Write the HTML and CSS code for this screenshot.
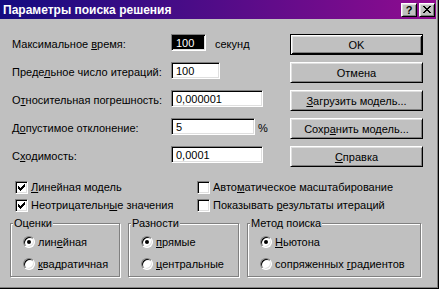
FILE: index.html
```html
<!DOCTYPE html>
<html lang="ru">
<head>
<meta charset="utf-8">
<title>Параметры поиска решения</title>
<link rel="stylesheet" href="styles.css">
</head>
<body>
<div class="window">
  <div class="titlebar">
    <span class="title">Параметры поиска решения</span>
    <div class="tb-buttons">
      <span class="tb-btn help">?</span>
      <span class="tb-btn close"><svg width="8" height="7" viewBox="0 0 8 7" shape-rendering="crispEdges"><path d="M0 0h2v1h-2z M6 0h2v1h-2z M1 1h2v1h-2z M5 1h2v1h-2z M2 2h4v1h-4z M3 3h2v1h-2z M2 4h4v1h-4z M1 5h2v1h-2z M5 5h2v1h-2z M0 6h2v1h-2z M6 6h2v1h-2z" fill="#000"/></svg></span>
    </div>
  </div>
  <div class="content">
    <div class="params">
      <div class="label">Максимальное <u>в</u>ремя:</div>
      <div class="cell"><div class="field w1 sel">100</div><span class="suffix sec">секунд</span></div>
      <div class="btn default">OK</div>

      <div class="label">Преде<u>л</u>ьное число итераций:</div>
      <div class="cell"><div class="field w2">100</div></div>
      <div class="btn">Отмена</div>

      <div class="label">О<u>т</u>носительная погрешность:</div>
      <div class="cell"><div class="field w3">0,000001</div></div>
      <div class="btn"><span><u>З</u>агрузить модель...</span></div>

      <div class="label">Д<u>о</u>пустимое отклонение:</div>
      <div class="cell"><div class="field w4">5</div><span class="suffix pct">%</span></div>
      <div class="btn"><span>Сохр<u>а</u>нить модель...</span></div>

      <div class="label">С<u>х</u>одимость:</div>
      <div class="cell"><div class="field w3">0,0001</div></div>
      <div class="btn"><span><u>С</u>правка</span></div>
    </div>

    <div class="checks">
      <div class="check"><span class="box"><svg width="11" height="11" viewBox="0 0 11 11" shape-rendering="crispEdges"><path d="M8 2h1v1h-1z M7 3h2v1h-2z M2 4h1v1h-1z M6 4h3v1h-3z M2 5h2v1h-2z M5 5h3v1h-3z M2 6h5v1h-5z M3 7h3v1h-3z M4 8h1v1h-1z" fill="#000"/></svg></span><span><u>Л</u>инейная модель</span></div>
      <div class="check"><span class="box"></span><span>Авто<u>м</u>атическое масштабирование</span></div>
      <div class="check"><span class="box"><svg width="11" height="11" viewBox="0 0 11 11" shape-rendering="crispEdges"><path d="M8 2h1v1h-1z M7 3h2v1h-2z M2 4h1v1h-1z M6 4h3v1h-3z M2 5h2v1h-2z M5 5h3v1h-3z M2 6h5v1h-5z M3 7h3v1h-3z M4 8h1v1h-1z" fill="#000"/></svg></span><span>Неотрицательн<u>ы</u>е значения</span></div>
      <div class="check"><span class="box"></span><span>Показывать <u>р</u>езультаты итераций</span></div>
    </div>

    <div class="groups">
      <fieldset class="group">
        <legend>Оценки</legend>
        <div class="opt"><span class="radio on"></span><span>лин<u>е</u>йная</span></div>
        <div class="opt"><span class="radio"></span><span><u>к</u>вадратичная</span></div>
      </fieldset>
      <fieldset class="group">
        <legend>Разности</legend>
        <div class="opt"><span class="radio on"></span><span><u>п</u>рямые</span></div>
        <div class="opt"><span class="radio"></span><span><u>ц</u>ентральные</span></div>
      </fieldset>
      <fieldset class="group">
        <legend>Метод поиска</legend>
        <div class="opt"><span class="radio on"></span><span><u>Н</u>ьютона</span></div>
        <div class="opt"><span class="radio"></span><span>сопряженных <u>г</u>радиентов</span></div>
      </fieldset>
    </div>
  </div>
</div>
</body>
</html>
```
FILE: styles.css
```css
* { box-sizing: border-box; }
html, body { margin: 0; padding: 0; }
body {
  width: 439px;
  height: 289px;
  overflow: hidden;
  background: #c0c0c0;
  font-family: "Liberation Sans", Arial, sans-serif;
  font-size: 11px;
  color: #000;
}
u { text-decoration-thickness: 1px; text-underline-offset: 1px; }

.window {
  width: 439px;
  height: 289px;
  background: #c0c0c0;
  border-right: 1px solid #000;
  border-bottom: 1px solid #000;
  box-shadow: inset -1px -1px #808080;
  padding: 0 2px 2px 0;
  display: flex;
  flex-direction: column;
}

.titlebar {
  height: 19px;
  flex: none;
  display: flex;
  align-items: center;
  padding: 0 1px 0 3px;
  background: linear-gradient(to right, #140c80, #900c90);
}
.title {
  color: #fff;
  font-weight: bold;
  font-size: 12px;
  white-space: nowrap;
}
.tb-buttons { margin-left: auto; display: flex; gap: 2px; }
.tb-btn {
  width: 16px;
  height: 14px;
  background: #c0c0c0;
  border: 1px solid;
  border-color: #fff #000 #000 #fff;
  box-shadow: inset 1px 1px #dfdfdf, inset -1px -1px #808080;
  display: flex;
  align-items: center;
  justify-content: center;
}
.help { font-weight: bold; font-size: 11px; line-height: 1; padding-top: 1px; }

.content { flex: 1; padding-top: 15px; }

.params {
  display: grid;
  grid-template-columns: 159px 119px 133px;
  grid-auto-rows: 28px;
  padding-left: 12px;
}
.label { padding-top: 4px; line-height: 13px; white-space: nowrap; }
.cell { display: flex; align-items: flex-start; }
.field {
  height: 17px;
  background: #fff;
  border: 1px solid;
  border-color: #808080 #fff #fff #808080;
  box-shadow: inset 1px 1px #000, inset -1px -1px #dfdfdf;
  padding: 1px 0 0 4px;
  line-height: 14px;
  white-space: nowrap;
}
.field.sel { background: #000; color: #fff; }
.w1 { width: 35px; }
.w2 { width: 49px; }
.w3 { width: 92px; }
.w4 { width: 84px; }
.suffix { padding-top: 4px; line-height: 13px; }
.sec { margin-left: 9px; }
.pct { margin-left: 3px; }

.btn {
  height: 21px;
  display: flex;
  align-items: center;
  justify-content: center;
  background: #c0c0c0;
  border: 1px solid;
  border-color: #fff #000 #000 #fff;
  box-shadow: inset 1px 1px #dfdfdf, inset -1px -1px #808080;
  white-space: nowrap;
}
.btn.default {
  border-color: #000;
  box-shadow: inset 1px 1px #fff, inset -1px -1px #000, inset 2px 2px #dfdfdf, inset -2px -2px #808080;
}

.checks {
  display: grid;
  grid-template-columns: 182px auto;
  grid-auto-rows: 13px;
  row-gap: 5px;
  padding-left: 15px;
  margin-top: 7px;
}
.check { display: flex; align-items: center; gap: 3px; line-height: 13px; white-space: nowrap; }
.box {
  width: 13px;
  height: 13px;
  flex: none;
  background: #fff;
  border: 1px solid;
  border-color: #808080 #fff #fff #808080;
  box-shadow: inset 1px 1px #000, inset -1px -1px #dfdfdf;
}
.box svg { display: block; }

.groups {
  display: grid;
  grid-template-columns: 110px 111px 174px;
  column-gap: 8px;
  padding-left: 10px;
  margin-top: 5px;
}
.group {
  margin: 0;
  min-width: 0;
  padding: 6px 4px 6px 12px;
  border: 1px solid #808080;
  box-shadow: inset 1px 1px #fff, 1px 1px #fff;
  display: flex;
  flex-direction: column;
  gap: 10px;
}
.group legend {
  margin-left: -10px;
  padding: 0 1px;
  line-height: 13px;
  background: #c0c0c0;
}
.opt { display: flex; align-items: center; gap: 3px; height: 12px; line-height: 13px; white-space: nowrap; }
.radio {
  position: relative;
  width: 12px;
  height: 12px;
  flex: none;
  border-radius: 50%;
  background: #fff;
  border: 1px solid;
  border-color: #808080 #fff #fff #808080;
  box-shadow: inset 1px 1px #000, inset -1px -1px #dfdfdf;
}
.radio.on::after {
  content: "";
  position: absolute;
  left: 3px;
  top: 3px;
  width: 4px;
  height: 4px;
  border-radius: 50%;
  background: #000;
}
```
